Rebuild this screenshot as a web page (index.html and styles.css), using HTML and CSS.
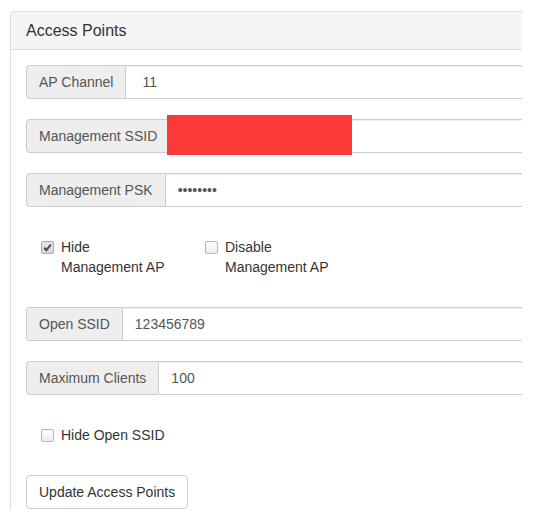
FILE: index.html
```html
<!DOCTYPE html>
<html>
<head>
<meta charset="utf-8">
<link rel="stylesheet" href="styles.css">
</head>
<body>
<div class="clip">
  <div class="panel">
    <div class="panel-heading"><h3 class="panel-title">Access Points</h3></div>
    <div class="panel-body">
      <div class="input-group">
        <span class="addon">AP Channel</span>
        <div class="control number">11</div>
      </div>
      <div class="input-group">
        <span class="addon">Management SSID</span>
        <div class="control"></div>
        <div class="redact"></div>
      </div>
      <div class="input-group">
        <span class="addon">Management PSK</span>
        <div class="control">••••••••</div>
      </div>
      <div class="check-row">
        <label class="check">
          <span class="box checked"><svg viewBox="0 0 13 13" width="13" height="13"><path d="M3.2 6.8 L5.4 9.2 L9.8 3.6" fill="none" stroke="#4a4a4a" stroke-width="2"/></svg></span>
          <span class="check-text">Hide<br>Management AP</span>
        </label>
        <label class="check">
          <span class="box"></span>
          <span class="check-text">Disable<br>Management AP</span>
        </label>
      </div>
      <div class="input-group">
        <span class="addon">Open SSID</span>
        <div class="control">123456789</div>
      </div>
      <div class="input-group">
        <span class="addon">Maximum Clients</span>
        <div class="control">100</div>
      </div>
      <div class="check-row single">
        <label class="check">
          <span class="box"></span>
          <span class="check-text">Hide Open SSID</span>
        </label>
      </div>
      <button class="btn">Update Access Points</button>
    </div>
  </div>
</div>
</body>
</html>
```

FILE: styles.css
```css
* { box-sizing: border-box; }
html, body { margin: 0; padding: 0; background: #fff; }
body {
  font-family: "Liberation Sans", Arial, sans-serif;
  font-size: 14px;
  line-height: 20px;
  color: #333;
}
.clip {
  margin: 11px 0 0 10px;
  width: 512px;
  height: 499px;
  overflow: hidden;
}
.panel {
  width: 800px;
  border: 1px solid #ddd;
  border-radius: 4px;
  background: #fff;
  min-height: 600px;
}
.panel-heading {
  background: #f5f5f5;
  border-bottom: 1px solid #ddd;
  padding: 10px 15px;
  border-radius: 3px 3px 0 0;
}
.panel-title {
  margin: 0;
  font-size: 16px;
  font-weight: normal;
  line-height: 17px;
  color: #333;
}
.panel-body { padding: 15px; }
.input-group {
  position: relative;
  display: flex;
  height: 34px;
  margin-bottom: 20px;
}
.addon {
  padding: 6px 12px;
  background: #eee;
  border: 1px solid #ccc;
  border-right: 0;
  border-radius: 4px 0 0 4px;
  color: #555;
  white-space: nowrap;
}
.control {
  flex: 1;
  border: 1px solid #ccc;
  border-radius: 0 4px 4px 0;
  padding: 6px 12px;
  color: #555;
  box-shadow: inset 0 1px 1px rgba(0,0,0,.075);
}
.control.number { padding-left: 16px; }
.redact {
  position: absolute;
  left: 141px;
  top: -4px;
  width: 185px;
  height: 40px;
  background: #fc3939;
}
.check-row {
  display: flex;
  padding: 10px 0 10px 15px;
  margin-bottom: 20px;
}
.check-row.single { padding: 10px 0 10px 15px; margin-bottom: 20px; }
.check {
  display: flex;
  align-items: flex-start;
  width: 164px;
}
.box {
  flex: none;
  width: 13px;
  height: 13px;
  margin-top: 4px;
  margin-right: 7px;
  border: 1px solid #b5b5b5;
  border-radius: 2px;
  background: linear-gradient(#fdfdfd, #ececec);
  display: flex;
}
.box.checked { background: linear-gradient(#e4e4e4, #d8d8d8); border-color: #aaa; }
.box svg { display: block; margin: -1px; }
.check-text { color: #333; }
.btn {
  display: inline-block;
  font-family: "Liberation Sans", Arial, sans-serif;
  font-size: 14px;
  line-height: 20px;
  padding: 6px 12px;
  border: 1px solid #ccc;
  border-radius: 4px;
  background: #fff;
  color: #333;
}
```
